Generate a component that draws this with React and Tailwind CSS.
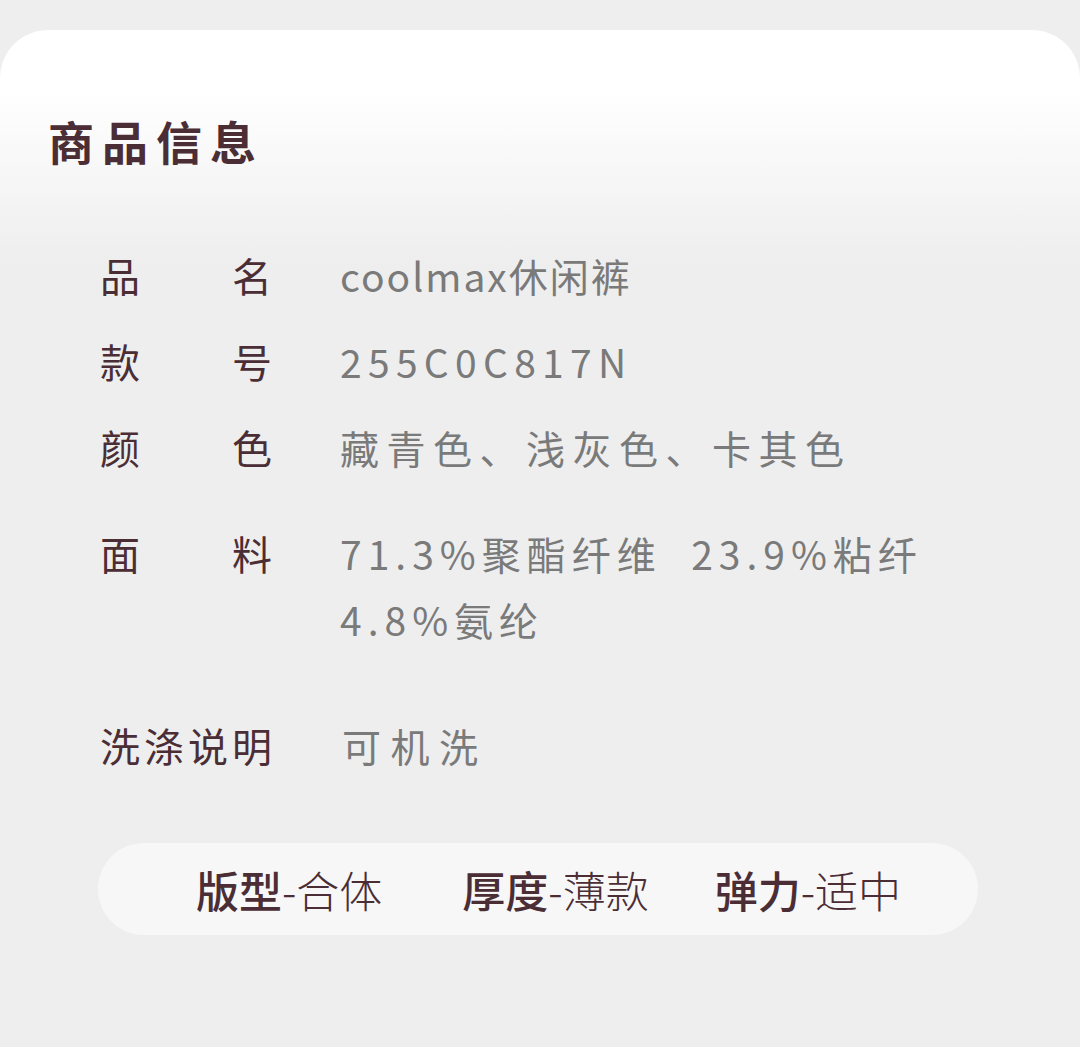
import React from 'react';

const rows = [
  { label: ['品', '名'], value: ['coolmax休闲裤'], tracking: 'tracking-[2px]' },
  { label: ['款', '号'], value: ['255C0C817N'], tracking: 'tracking-[6.3px]' },
  { label: ['颜', '色'], value: ['藏青色、浅灰色、卡其色'], tracking: 'tracking-[7.5px]' },
  { label: ['面', '料'], value: ['71.3%聚酯纤维\u00a0\u00a023.9%粘纤', '4.8%氨纶'], tracking: 'tracking-[6px]' },
];

const specs = [
  { name: '版型', value: '合体', margin: 'ml-[98px]' },
  { name: '厚度', value: '薄款', margin: 'ml-[80px]' },
  { name: '弹力', value: '适中', margin: 'ml-[66px]' },
];

const App = () => {
  return (
    <section
      className="min-h-[1047px] bg-[#eeeeee] pt-[30px]"
      style={{ fontFamily: '"Noto Sans CJK SC", "Noto Sans", sans-serif' }}
    >
      <div className="rounded-t-[48px] bg-gradient-to-b from-white from-[6%] to-[#eeeeee] to-[23%] min-h-[1017px]">
        {/* Title */}
        <h2 className="pl-[48px] pt-[80px] text-[46px] leading-[60px] font-bold tracking-[8px] text-[#4b2e35]">
          商品信息
        </h2>

        {/* Info rows */}
        <div className="pl-[100px] pt-[72px]">
          <div className="flex flex-col gap-[20px]">
            {rows.map((row, i) => (
              <div key={i} className={`flex ${i === 3 ? 'mt-[20px]' : ''}`}>
                <div className="w-[172px] flex justify-between text-[40px] leading-[66px] text-[#4b2e35] shrink-0">
                  <span>{row.label[0]}</span>
                  <span>{row.label[1]}</span>
                </div>
                <div className={`ml-[68px] text-[39px] leading-[66px] text-[#7a7a7a] ${row.tracking}`}>
                  {row.value.map((line, j) => (
                    <div key={j}>{line}</div>
                  ))}
                </div>
              </div>
            ))}
          </div>

          <div className="flex mt-[60px]">
            <div className="w-[172px] text-[40px] leading-[66px] text-[#4b2e35] tracking-[4px] shrink-0 whitespace-nowrap">
              洗涤说明
            </div>
            <div className="ml-[70px] text-[39px] leading-[66px] text-[#7a7a7a] tracking-[9.5px]">可机洗</div>
          </div>
        </div>

        {/* Spec pill */}
        <div className="mx-[98px] mt-[65px] w-[880px] h-[92px] rounded-full bg-[#f7f7f7] flex items-center">
          {specs.map((s) => (
            <div key={s.name} className={`${s.margin} text-[43px] leading-none text-[#4b2e35] whitespace-nowrap`}>
              <span className="font-medium">{s.name}</span>
              <span className="font-light">-{s.value}</span>
            </div>
          ))}
        </div>
      </div>
    </section>
  );
};

export default App;
